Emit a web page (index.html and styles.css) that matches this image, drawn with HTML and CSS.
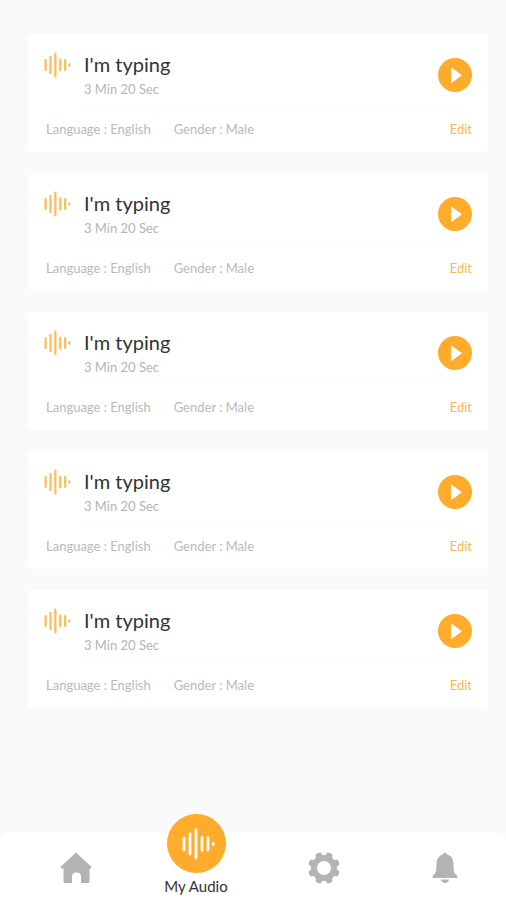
FILE: index.html
```html
<!DOCTYPE html>
<html lang="en">
<head>
<meta charset="utf-8">
<meta name="viewport" content="width=device-width, initial-scale=1">
<title>My Audio</title>
<link rel="stylesheet" href="styles.css">
</head>
<body>
<svg class="defs" aria-hidden="true">
  <symbol id="audio" viewBox="0 0 34 32">
    <path d="M3 10v12M9 6v20M15 2v28M21 9.500v13M27 10v12" fill="none" stroke="currentColor" stroke-width="2.800" stroke-linecap="round"/>
    <path d="M31 15.500l2-1.500v4l-2-1.500z" fill="currentColor" stroke="currentColor" stroke-width="1" stroke-linejoin="round"/>
  </symbol>
  <symbol id="play" viewBox="0 0 34 34">
    <circle cx="17" cy="17" r="17" fill="#ffab2b"/>
    <path d="M13.500 10v14.500l9.800-7.200z" fill="#fff" stroke="#fff" stroke-width="1" stroke-linejoin="round"/>
  </symbol>
</svg>
<main class="list">
  <article class="card">
    <div class="top">
      <svg class="wave" aria-hidden="true"><use href="#audio"/></svg>
      <div class="info"><h2>I'm typing</h2><p>3 Min 20 Sec</p></div>
      <button class="play" type="button" aria-label="Play"><svg aria-hidden="true"><use href="#play"/></svg></button>
    </div>
    <hr>
    <div class="meta"><span>Language : English</span><span>Gender : Male</span><a href="#">Edit</a></div>
  </article>
  <article class="card">
    <div class="top">
      <svg class="wave" aria-hidden="true"><use href="#audio"/></svg>
      <div class="info"><h2>I'm typing</h2><p>3 Min 20 Sec</p></div>
      <button class="play" type="button" aria-label="Play"><svg aria-hidden="true"><use href="#play"/></svg></button>
    </div>
    <hr>
    <div class="meta"><span>Language : English</span><span>Gender : Male</span><a href="#">Edit</a></div>
  </article>
  <article class="card">
    <div class="top">
      <svg class="wave" aria-hidden="true"><use href="#audio"/></svg>
      <div class="info"><h2>I'm typing</h2><p>3 Min 20 Sec</p></div>
      <button class="play" type="button" aria-label="Play"><svg aria-hidden="true"><use href="#play"/></svg></button>
    </div>
    <hr>
    <div class="meta"><span>Language : English</span><span>Gender : Male</span><a href="#">Edit</a></div>
  </article>
  <article class="card">
    <div class="top">
      <svg class="wave" aria-hidden="true"><use href="#audio"/></svg>
      <div class="info"><h2>I'm typing</h2><p>3 Min 20 Sec</p></div>
      <button class="play" type="button" aria-label="Play"><svg aria-hidden="true"><use href="#play"/></svg></button>
    </div>
    <hr>
    <div class="meta"><span>Language : English</span><span>Gender : Male</span><a href="#">Edit</a></div>
  </article>
  <article class="card">
    <div class="top">
      <svg class="wave" aria-hidden="true"><use href="#audio"/></svg>
      <div class="info"><h2>I'm typing</h2><p>3 Min 20 Sec</p></div>
      <button class="play" type="button" aria-label="Play"><svg aria-hidden="true"><use href="#play"/></svg></button>
    </div>
    <hr>
    <div class="meta"><span>Language : English</span><span>Gender : Male</span><a href="#">Edit</a></div>
  </article>
</main>
<nav class="tabs">
  <a href="#" aria-label="Home">
    <svg class="icon" viewBox="0 0 32 32" aria-hidden="true"><path d="M16 .5 31 14.500Q32 16 30.500 16.500H29.500V30q0 1-1 1H21v-6.500q0-4-4.500-4T12 24.500V31H4.500q-1 0-1-1V16.500H1.500Q0 16 1 14.500z" fill="#b3b3b3"/></svg>
  </a>
  <a class="current" href="#" aria-current="page">
    <span class="disc"><svg aria-hidden="true"><use href="#audio"/></svg></span>
    <span>My Audio</span>
  </a>
  <a href="#" aria-label="Settings">
    <svg class="icon" viewBox="-16 -16 32 32" fill="#b3b3b3" aria-hidden="true">
      <mask id="hole"><rect x="-16" y="-16" width="32" height="32" fill="#fff"/><circle r="7" fill="#000"/></mask>
      <g mask="url(#hole)">
        <circle r="13"/>
        <rect x="-3.300" y="-15.900" width="6.600" height="31.800" rx="2" transform="rotate(22.500)"/>
        <rect x="-3.300" y="-15.900" width="6.600" height="31.800" rx="2" transform="rotate(67.500)"/>
        <rect x="-3.300" y="-15.900" width="6.600" height="31.800" rx="2" transform="rotate(112.500)"/>
        <rect x="-3.300" y="-15.900" width="6.600" height="31.800" rx="2" transform="rotate(157.500)"/>
      </g>
    </svg>
  </a>
  <a href="#" aria-label="Notifications">
    <svg class="icon" viewBox="0 0 32 32" fill="#b3b3b3" aria-hidden="true"><path d="M14.300 2.200Q14.500.5 16 .5t1.700 1.700C22 3.500 24.500 7 24.500 12c0 7 .5 9 3.500 11.500q.5.700.3 2.500H3.700Q3.500 24.200 4 23.500C7 21 7.500 19 7.500 12c0-5 2.500-8.500 6.800-9.800zM12 27.500h8q-.8 3.500-4 3.500t-4-3.500z"/></svg>
  </a>
</nav>
</body>
</html>
```
FILE: styles.css
```css
* { box-sizing: border-box; }

body {
  margin: 0;
  min-height: 100vh;
  display: flex;
  flex-direction: column;
  background: #fafafa;
  color: #333;
  font-family: Lato, "Liberation Sans", sans-serif;
}

.defs { display: none; }

h2, p { margin: 0; font-weight: 400; }

a { color: inherit; text-decoration: none; }

.list {
  display: flex;
  flex-direction: column;
  gap: 21px;
  padding: 34px 18px 34px 28px;
}

.card {
  padding: 17px 16px 13px;
  border-radius: 4px;
  background: #fff;
}

.top {
  display: flex;
  padding-bottom: 3px;
}

.wave {
  width: 28px;
  height: 26px;
  margin: 1px 13px 0 -1px;
  color: #fdbd5c;
}

.info { flex: 1; }

h2 {
  font-size: 20px;
  line-height: 26px;
}

.info p {
  color: #b5b5b5;
  font-size: 13px;
  line-height: 25px;
}

.play {
  width: 34px;
  height: 34px;
  margin-top: 7px;
  padding: 0;
  border: 0;
  border-radius: 50%;
  background: none;
}

.play svg {
  display: block;
  width: 100%;
  height: 100%;
}

hr {
  margin: 0 6px 0 36px;
  border: 0;
  border-top: 1px solid #fafafa;
}

.meta {
  display: flex;
  gap: 23px;
  padding: 13px 0 0 2px;
  color: #bababa;
  font-size: 13px;
  line-height: 20px;
}

.meta a {
  margin-left: auto;
  color: #ffb64b;
}

.tabs {
  display: grid;
  grid-template-columns: 120fr 120fr 136fr 106fr;
  height: 68px;
  margin-top: auto;
  padding: 0 8px 0 16px;
  border-radius: 10px 10px 0 0;
  background: #fff;
}

.tabs a {
  display: flex;
  flex-direction: column;
  align-items: center;
  padding-top: 20px;
}

.icon {
  width: 32px;
  height: 32px;
}

.tabs .current {
  margin-top: -18px;
  padding-top: 0;
  font-size: 15px;
  line-height: 26px;
}

.disc {
  display: flex;
  align-items: center;
  justify-content: center;
  width: 59px;
  height: 59px;
  padding-left: 3px;
  border-radius: 50%;
  background: #ffab2b;
  color: #fff;
}

.disc svg {
  width: 34px;
  height: 32px;
}
```
